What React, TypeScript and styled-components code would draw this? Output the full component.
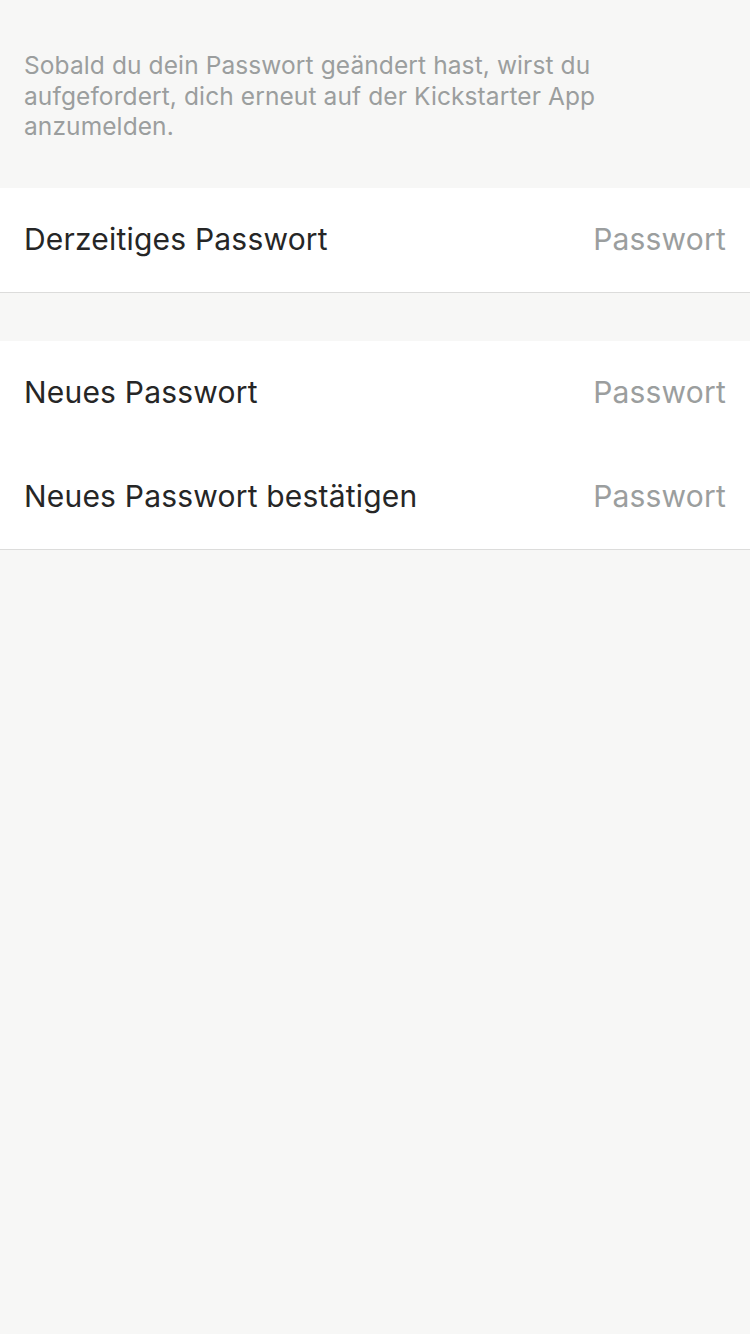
import React from "react";
import styled, { createGlobalStyle } from "styled-components";

const Global = createGlobalStyle`
  html, body { margin: 0; padding: 0; background: #f7f7f6; }
  body { font-family: Inter, "Noto Sans", "Liberation Sans", sans-serif; -webkit-font-smoothing: antialiased; }
`;

const Page = styled.div`
  min-height: 1334px;
  background: #f7f7f6;
  display: flex;
  flex-direction: column;
`;

const Caption = styled.p`
  margin: 0;
  padding: 50px 126px 46px 24px;
  font-size: 24.5px;
  line-height: 30.5px;
  color: #9b9e9e;
  letter-spacing: 0.1px;
`;

const Section = styled.div<{ $gapTop?: number }>`
  background: #ffffff;
  border-bottom: 1px solid #dcdcdb;
  margin-top: ${(p) => p.$gapTop ?? 0}px;
  display: flex;
  flex-direction: column;
`;

const Row = styled.div`
  height: 104px;
  display: flex;
  align-items: center;
  justify-content: space-between;
  padding: 0 24px 1px 24px;
  box-sizing: border-box;
`;

const Label = styled.span`
  font-size: 30px;
  color: #262626;
  letter-spacing: 0.2px;
`;

const Placeholder = styled.span`
  font-size: 30px;
  color: #9b9e9e;
  letter-spacing: 0.2px;
`;

export default function App() {
  return (
    <>
      <Global />
      <Page>
        <Caption>
          Sobald du dein Passwort geändert hast, wirst du aufgefordert, dich erneut auf der Kickstarter App anzumelden.
        </Caption>
        <Section>
          <Row>
            <Label>Derzeitiges Passwort</Label>
            <Placeholder>Passwort</Placeholder>
          </Row>
        </Section>
        <Section $gapTop={48}>
          <Row>
            <Label>Neues Passwort</Label>
            <Placeholder>Passwort</Placeholder>
          </Row>
          <Row>
            <Label>Neues Passwort bestätigen</Label>
            <Placeholder>Passwort</Placeholder>
          </Row>
        </Section>
      </Page>
    </>
  );
}
